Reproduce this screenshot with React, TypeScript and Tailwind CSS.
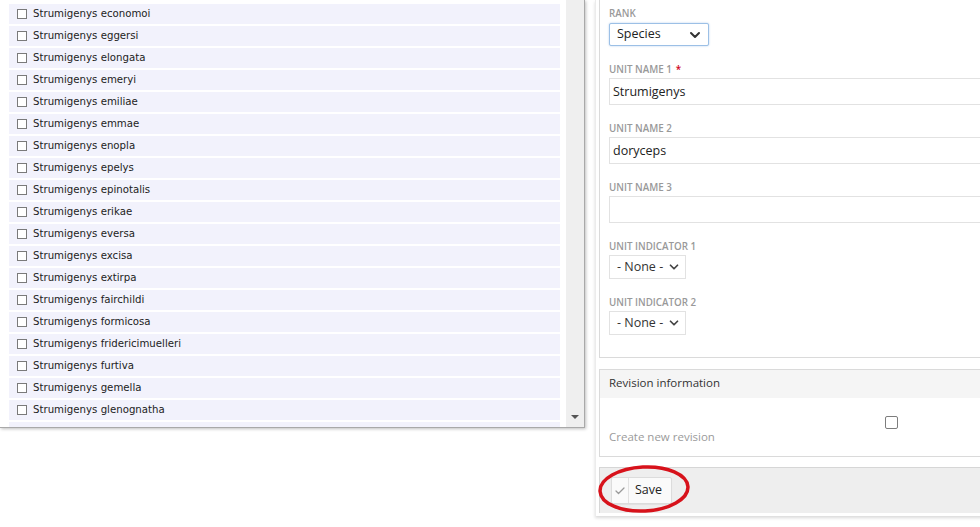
import { ChevronDown, Check } from "lucide-react";

const species = [
  "economoi",
  "eggersi",
  "elongata",
  "emeryi",
  "emiliae",
  "emmae",
  "enopla",
  "epelys",
  "epinotalis",
  "erikae",
  "eversa",
  "excisa",
  "extirpa",
  "fairchildi",
  "formicosa",
  "fridericimuelleri",
  "furtiva",
  "gemella",
  "glenognatha",
];

const labelCls =
  "block h-[14px] text-[9.8px] leading-[15px] font-semibold uppercase text-[#999]";

function FieldLabel({ children, required }: { children: string; required?: boolean }) {
  return (
    <span className={labelCls}>
      {children}
      {required && <span className="ml-1 text-[#d0021b]">*</span>}
    </span>
  );
}

function TextInput({ value }: { value?: string }) {
  return (
    <div className="mt-[2px] h-[27px] w-full border border-[#e2e2e2] bg-white pl-[3px] text-[12.5px] leading-[25px] text-[#222]">
      {value}
    </div>
  );
}

function SmallSelect({ value }: { value: string }) {
  return (
    <div className="mt-[2px] flex h-[24px] w-[77px] items-center justify-between border border-[#e2e2e2] bg-white pl-[7px] pr-[4px] text-[12.5px] text-[#333]">
      <span>{value}</span>
      <ChevronDown className="h-3.5 w-3.5 text-[#444]" strokeWidth={3} />
    </div>
  );
}

export default function App() {
  return (
    <div className="h-[527px] w-[980px] overflow-hidden bg-white">
      <div className="flex items-start">
        {/* taxon list */}
        <div className="flex h-[428px] w-[585px] shrink-0 border-r border-b border-[#a9a9a9] bg-white shadow-[1px_1px_3px_rgba(0,0,0,0.25)]">
          <div className="flex-1 overflow-hidden pt-[4px] pl-[9px] pr-[4px]">
            <ul className="flex flex-col gap-[2px]">
              {species.map((name) => (
                <li
                  key={name}
                  className="flex h-[20px] w-[551px] items-center bg-[#f2f2fc] pl-[8px] font-['DejaVu_Sans',sans-serif] text-[10.2px] text-[#222]"
                >
                  <span className="mr-[6px] h-[10px] w-[10px] border border-[#7a7a7a] bg-white" />
                  Strumigenys {name}
                </li>
              ))}
              <li className="h-[20px] w-[551px] bg-[#f2f2fc]" />
            </ul>
          </div>
          <div className="flex w-[18px] shrink-0 flex-col justify-end bg-[#efefef] pb-[8px]">
            <svg viewBox="0 0 8 4" className="mx-auto h-[4px] w-[8px]">
              <path d="M0 0h8L4 4z" fill="#555" />
            </svg>
          </div>
        </div>

        {/* edit form */}
        <div className="ml-[10px] w-[420px] shrink-0 border-l border-[#ececec] pl-[3px] pb-[3px] font-['Open_Sans',sans-serif] shadow-[0_2px_3px_rgba(0,0,0,0.15)]">
          <div className="border-l border-b border-[#dadada] pt-[6px] pb-[22px] pl-[9px]">
            <FieldLabel>Rank</FieldLabel>
            <div className="mt-[3px] flex h-[23px] w-[100px] items-center justify-between rounded-[2px] border border-[#9cc0e6] bg-white pl-[7px] pr-[5px] text-[12.5px] text-[#222] shadow-[0_0_2px_rgba(80,140,210,0.45)]">
              <span>Species</span>
              <ChevronDown className="h-4 w-4 text-[#333]" strokeWidth={3} />
            </div>

            <div className="mt-[16px]">
              <FieldLabel required>Unit name 1</FieldLabel>
              <TextInput value="Strumigenys" />
            </div>
            <div className="mt-[16px]">
              <FieldLabel>Unit name 2</FieldLabel>
              <TextInput value="doryceps" />
            </div>
            <div className="mt-[16px]">
              <FieldLabel>Unit name 3</FieldLabel>
              <TextInput />
            </div>
            <div className="mt-[16px]">
              <FieldLabel>Unit indicator 1</FieldLabel>
              <SmallSelect value="- None -" />
            </div>
            <div className="mt-[16px]">
              <FieldLabel>Unit indicator 2</FieldLabel>
              <SmallSelect value="- None -" />
            </div>
          </div>

          <div className="mt-[11px] border-t border-l border-b border-[#dadada]">
            <div className="h-[28px] bg-[#f5f5f5] pl-[9px] text-[11.5px] leading-[25px] text-[#333]">
              Revision information
            </div>
            <div className="pt-[18px] pb-[12px] pl-[9px]">
              <span className="ml-[276px] block h-[13px] w-[13px] rounded-[2px] border border-[#7d7d7d] bg-white" />
              <p className="mt-[1px] text-[11.5px] leading-[14px] text-[#9b9b9b]">Create new revision</p>
            </div>
          </div>

          <div className="relative mt-[10px] h-[46px] border-t border-l border-[#d6d6d6] bg-[#eeeeee] pt-[9px] pl-[11px]">
            <div className="flex h-[27px] w-[61px] items-center rounded-[2px] border border-[#dcdcdc] bg-[#fafafa] text-[12.5px] text-[#222] shadow-[0_1px_1px_rgba(0,0,0,0.06)]">
              <span className="flex h-full w-[17px] items-center justify-center border-r border-[#e2e2e2]">
                <Check className="h-[12px] w-[12px] text-[#9a9a9a]" strokeWidth={2.5} />
              </span>
              <span className="pl-[6px]">Save</span>
            </div>
            <svg
              className="pointer-events-none absolute top-[-6px] left-[-4px] h-[54px] w-[96px] overflow-visible"
              viewBox="0 0 96 54"
            >
              <ellipse
                cx="48"
                cy="27"
                rx="44"
                ry="22"
                fill="none"
                stroke="#d7121b"
                strokeWidth="3.5"
                transform="rotate(-3 48 27)"
              />
            </svg>
          </div>
        </div>
      </div>
    </div>
  );
}
